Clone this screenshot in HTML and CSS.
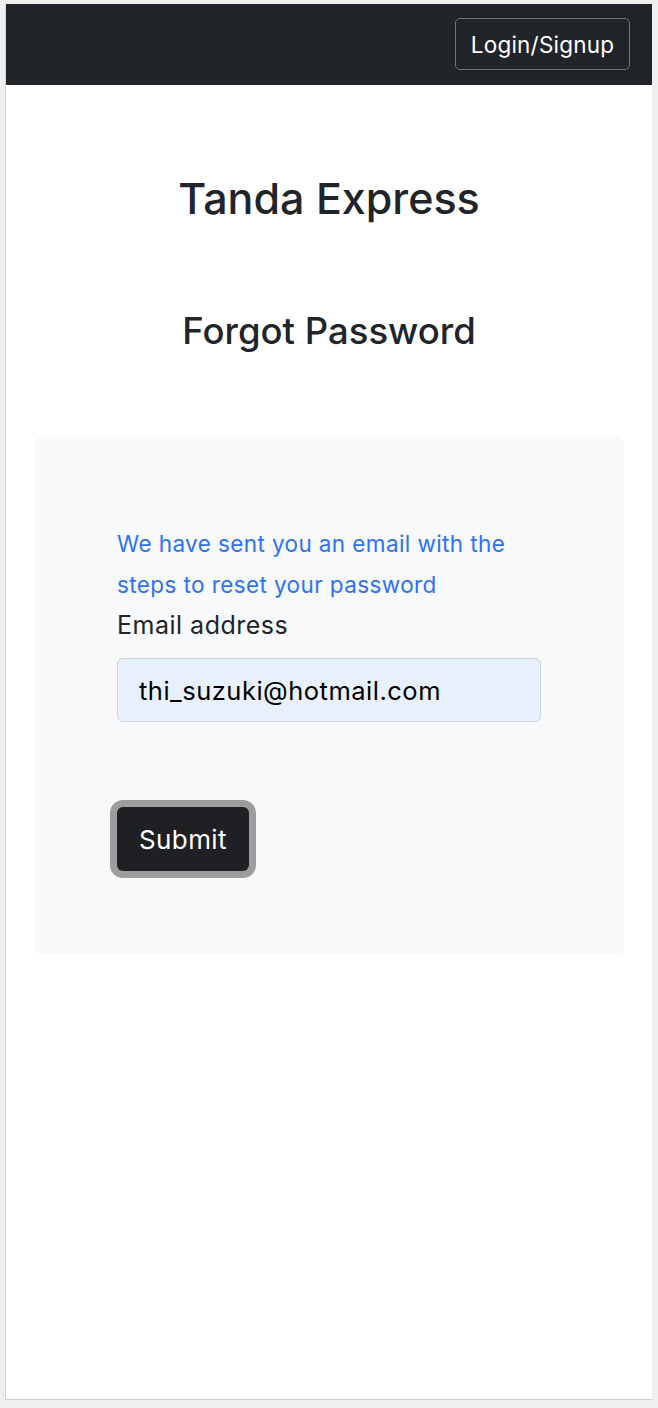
FILE: index.html
```html
<!DOCTYPE html>
<html lang="en">
<head>
<meta charset="utf-8">
<title>Tanda Express - Forgot Password</title>
<link rel="stylesheet" href="styles.css">
</head>
<body>
<div class="page">
  <nav class="navbar">
    <button class="nav-btn" type="button">Login/Signup</button>
  </nav>
  <main class="main">
    <h1 class="title">Tanda Express</h1>
    <h2 class="subtitle">Forgot Password</h2>
    <section class="card">
      <form class="form">
        <p class="notice">We have sent you an email with the steps to reset your password</p>
        <label class="label" for="email">Email address</label>
        <input class="input" id="email" type="email" value="thi_suzuki@hotmail.com">
        <div class="actions">
          <button class="submit" type="button">Submit</button>
        </div>
      </form>
    </section>
  </main>
</div>
</body>
</html>
```
FILE: styles.css
```css
html, body {
  margin: 0;
  padding: 0;
}
body {
  background: #efefef;
  font-family: Inter, "Liberation Sans", Arial, sans-serif;
  color: #212529;
}
.page {
  margin: 4px 6px 0 5px;
  height: 1396px;
  background: #fff;
  border-left: 1px solid #d4d4d4;
  border-bottom: 1px solid #cfcfcf;
  box-sizing: border-box;
  display: flex;
  flex-direction: column;
}
.navbar {
  background: #212529;
  height: 81px;
  display: flex;
  align-items: center;
  justify-content: flex-end;
  padding: 0 22px 1px 0;
  box-sizing: border-box;
}
.nav-btn {
  width: 175px;
  height: 52px;
  background: transparent;
  color: #fff;
  border: 1.5px solid #6c757d;
  border-radius: 5px;
  font-family: inherit;
  font-size: 22.5px;
  letter-spacing: 0.2px;
  padding: 0;
}
.main {
  display: flex;
  flex-direction: column;
  align-items: center;
}
.title {
  margin: 88px 0 0;
  font-size: 43px;
  font-weight: 500;
  line-height: 50px;
}
.subtitle {
  margin: 87px 0 0;
  font-size: 36.5px;
  font-weight: 500;
  line-height: 43px;
}
.card {
  margin-top: 84px;
  width: 590px;
  box-sizing: border-box;
  background: #f8f9fa;
  border-radius: 8px;
  padding: 86px 83px 83px;
}
.form {
  display: flex;
  flex-direction: column;
}
.notice {
  margin: 0;
  color: #2f72f2;
  font-size: 22.5px;
  letter-spacing: 0.4px;
  line-height: 41px;
}
.label {
  font-size: 25px;
  letter-spacing: 0.5px;
  line-height: 36px;
  margin-top: 2px;
}
.input {
  margin-top: 15px;
  height: 64px;
  box-sizing: border-box;
  background: #e8f0fe;
  border: 1.5px solid #ced4da;
  border-radius: 6px;
  padding: 0 21px;
  font-family: inherit;
  font-size: 25.5px;
  letter-spacing: 0.5px;
  color: #000;
}
.actions {
  margin-top: 85px;
}
.submit {
  width: 132px;
  height: 64px;
  background: #1f2023;
  color: #fff;
  border: none;
  border-radius: 6px;
  box-shadow: 0 0 0 7px #9d9d9d;
  font-family: inherit;
  font-size: 26px;
  letter-spacing: 0.4px;
  padding: 0;
}
```
